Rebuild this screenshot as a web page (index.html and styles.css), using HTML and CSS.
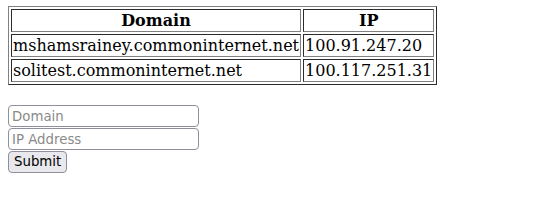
FILE: index.html
```html
<!DOCTYPE html>
<html>
<head>
<meta charset="utf-8">
<title>Domains</title>
<link rel="stylesheet" href="styles.css">
</head>
<body class="page">
<table class="hosts">
<tr><th class="cell">Domain</th><th class="cell">IP</th></tr>
<tr><td class="cell">mshamsrainey.commoninternet.net</td><td class="cell">100.91.247.20</td></tr>
<tr><td class="cell">solitest.commoninternet.net</td><td class="cell">100.117.251.31</td></tr>
</table>
<form class="add-form">
<input class="field" type="text" placeholder="Domain">
<input class="field" type="text" placeholder="IP Address">
<button class="submit" type="submit">Submit</button>
</form>
</body>
</html>
```

FILE: styles.css
```css
.page {
  margin: 6px 8px 8px;
  font-family: "DejaVu Serif", serif;
}
.hosts {
  border: 1px outset #808080;
  border-spacing: 2px;
}
.cell {
  border: 1px inset #808080;
  padding: 1px;
  line-height: 19px;
}
.add-form {
  margin-top: 20px;
  display: flex;
  flex-direction: column;
  align-items: flex-start;
  gap: 1px;
}
.field,
.submit {
  font-family: "DejaVu Sans", sans-serif;
  font-size: 13.333px;
  line-height: 16px;
  height: 22px;
  box-sizing: border-box;
  border: 1px solid #8f8f9d;
  border-radius: 4px;
  margin: 0;
  color: #000;
}
.field {
  width: 191px;
  padding: 2px 3px;
  background: #fff;
}
.field::placeholder {
  color: #8a8a8a;
}
.submit {
  padding: 2px 5px;
  background: #e9e9ed;
}
```
